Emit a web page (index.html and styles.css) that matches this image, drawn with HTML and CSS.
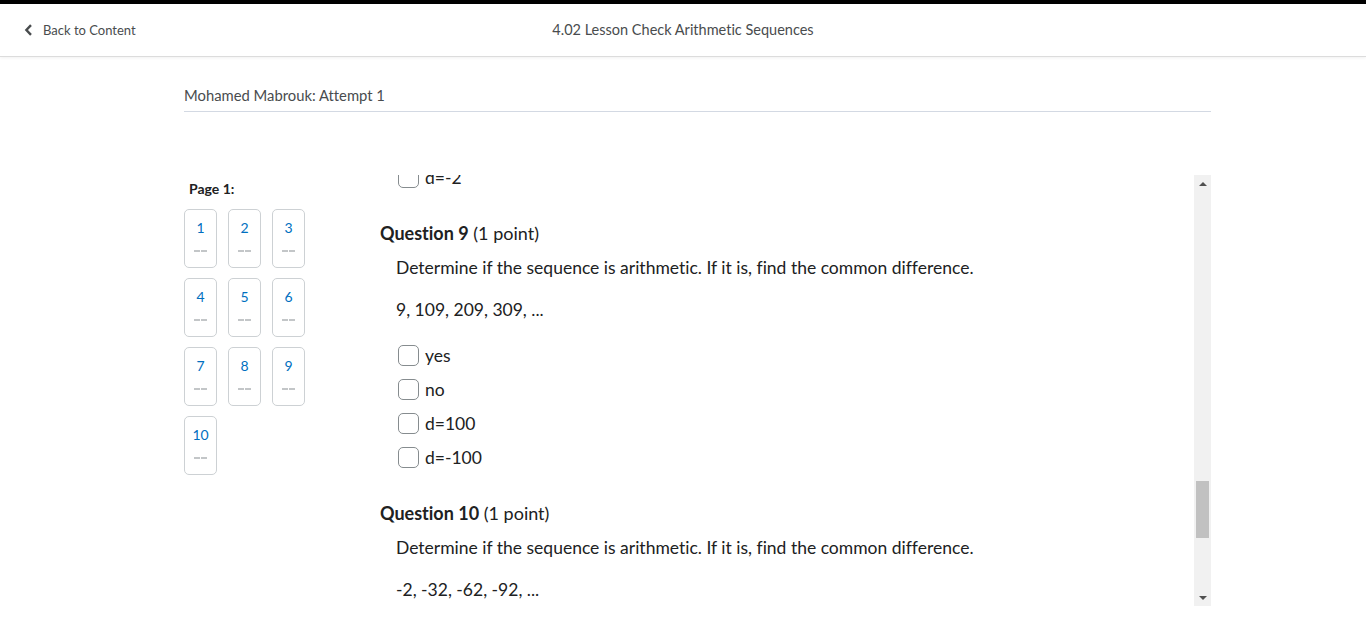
FILE: index.html
```html
<!DOCTYPE html>
<html>
<head>
<meta charset="utf-8">
<link rel="stylesheet" href="styles.css">
</head>
<body>
<div class="topbar"></div>
<header class="header">
  <a class="back"><svg class="chev" width="9" height="12" viewBox="0 0 9 12"><path d="M7 1.2 L2.4 6 L7 10.8" fill="none" stroke="#494c4e" stroke-width="2.4"/></svg><span>Back to Content</span></a>
  <div class="title">4.02 Lesson Check Arithmetic Sequences</div>
</header>
<main class="wrap">
  <div class="attempt">Mohamed Mabrouk: Attempt 1</div>
  <div class="body">
    <aside class="side">
      <div class="pagelbl">Page 1:</div>
      <div class="tiles">
        <div class="tile"><span class="num">1</span><span class="dash"><i></i><i></i></span></div>
        <div class="tile"><span class="num">2</span><span class="dash"><i></i><i></i></span></div>
        <div class="tile"><span class="num">3</span><span class="dash"><i></i><i></i></span></div>
        <div class="tile"><span class="num">4</span><span class="dash"><i></i><i></i></span></div>
        <div class="tile"><span class="num">5</span><span class="dash"><i></i><i></i></span></div>
        <div class="tile"><span class="num">6</span><span class="dash"><i></i><i></i></span></div>
        <div class="tile"><span class="num">7</span><span class="dash"><i></i><i></i></span></div>
        <div class="tile"><span class="num">8</span><span class="dash"><i></i><i></i></span></div>
        <div class="tile"><span class="num">9</span><span class="dash"><i></i><i></i></span></div>
        <div class="tile"><span class="num">10</span><span class="dash"><i></i><i></i></span></div>
      </div>
    </aside>
    <section class="scroller">
      <div class="inner">
        <div class="opt"><span class="cb"></span><span>d=-2</span></div>
        <div class="q">
          <h2 class="qh"><b>Question 9</b> (1 point)</h2>
          <p class="qt">Determine if the sequence is arithmetic. If it is, find the common difference.</p>
          <p class="qt seq">9, 109, 209, 309, ...</p>
          <div class="opts">
            <div class="opt"><span class="cb"></span><span>yes</span></div>
            <div class="opt"><span class="cb"></span><span>no</span></div>
            <div class="opt"><span class="cb"></span><span>d=100</span></div>
            <div class="opt"><span class="cb"></span><span>d=-100</span></div>
          </div>
        </div>
        <div class="q">
          <h2 class="qh"><b>Question 10</b> (1 point)</h2>
          <p class="qt">Determine if the sequence is arithmetic. If it is, find the common difference.</p>
          <p class="qt seq">-2, -32, -62, -92, ...</p>
        </div>
      </div>
    </section>
    <div class="sbar">
      <span class="arr up"></span>
      <div class="track"><div class="thumb"></div></div>
      <span class="arr down"></span>
    </div>
  </div>
</main>
</body>
</html>
```
FILE: styles.css
```css
* { box-sizing: border-box; }
html, body { margin: 0; padding: 0; background: #fff; }
body { font-family: Lato, "Open Sans", sans-serif; color: #202122; overflow: hidden; height: 624px; font-variant-ligatures: none; }
.topbar { height: 4px; background: #000; }
.header {
  height: 53px;
  position: relative;
  display: flex;
  align-items: center;
  justify-content: center;
  border-bottom: 1px solid #dcdcdc;
  box-shadow: 0 1px 3px rgba(0,0,0,0.06);
}
.back {
  position: absolute;
  left: 24px;
  top: 0;
  height: 52px;
  display: flex;
  align-items: center;
  gap: 10px;
  font-size: 13px;
  color: #494c4e;
  text-decoration: none;
}
.chev { display: block; }
.title { font-size: 14.5px; color: #494c4e; margin-top: -2px; }
.wrap { width: 1027px; margin-left: 184px; }
.attempt {
  margin-top: 28px;
  font-size: 14.8px;
  line-height: 20px;
  color: #494c4e;
  padding-bottom: 6px;
  border-bottom: 1px solid #d3d9e3;
}
.body { display: flex; margin-top: 63px; height: 431px; }
.side { width: 196px; flex: none; }
.pagelbl { font-size: 14px; font-weight: 700; line-height: 20px; padding: 4px 0 0 5px; color: #202122; }
.tiles { margin-top: 10px; display: grid; grid-template-columns: repeat(3, 33px); column-gap: 11px; row-gap: 10px; }
.tile {
  width: 33px; height: 59px;
  border: 1px solid #cdd1d4;
  border-radius: 5px;
  display: flex; flex-direction: column; align-items: center;
  padding-top: 9px;
}
.num { font-size: 14px; line-height: 18px; color: #006fbf; }
.dash { display: flex; gap: 1px; margin-top: 13px; }
.dash i { display: block; width: 6px; height: 2px; background: #c3c6c8; }
.scroller { flex: 1; overflow: hidden; }
.inner { margin-top: -15px; }
.opt { height: 34px; display: flex; align-items: center; padding-left: 18px; font-size: 17.5px; color: #202122; }
.cb {
  width: 21px; height: 21px;
  border: 1px solid #868c8f;
  border-radius: 5px;
  background: #fff;
  margin-right: 6px;
  flex: none;
}
.q { margin-top: 26px; }
.qh { margin: 0; font-size: 18px; line-height: 26px; font-weight: 400; color: #202122; }
.qh b { font-weight: 700; }
.qt { margin: 9px 0 0 16px; font-size: 17.5px; line-height: 26px; color: #202122; }
.seq { margin-top: 16px; }
.opts { margin-top: 15px; }
.sbar { width: 17px; flex: none; background: #f1f1f1; display: flex; flex-direction: column; align-items: center; }
.track { flex: 1; width: 100%; padding: 0 2px; display: flex; flex-direction: column; justify-content: flex-start; }
.thumb { margin-top: 288px; height: 57px; background: #c1c1c1; }
.arr { width: 0; height: 0; border-left: 4px solid transparent; border-right: 4px solid transparent; flex: none; }
.up { border-bottom: 4px solid #505050; margin-top: 7px; margin-bottom: 7px; }
.down { border-top: 4px solid #505050; margin-bottom: 6px; margin-top: 7px; }
```
